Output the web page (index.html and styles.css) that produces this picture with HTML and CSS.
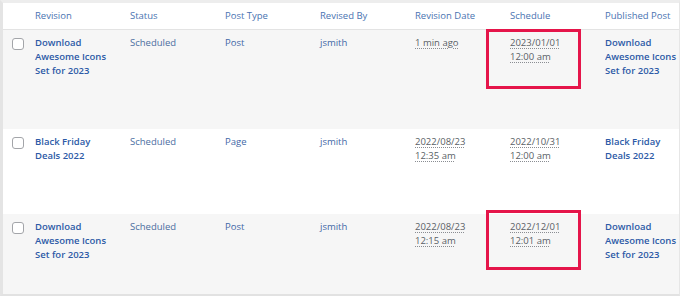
FILE: index.html
```html
<!DOCTYPE html>
<html lang="en">
<head>
<meta charset="utf-8">
<title>Revisions</title>
<link rel="stylesheet" href="styles.css">
</head>
<body>
<div class="frame">
  <table class="revisions">
    <colgroup>
      <col class="c-check">
      <col class="c-col"><col class="c-col"><col class="c-col"><col class="c-col"><col class="c-col"><col class="c-col"><col class="c-last">
    </colgroup>
    <thead>
      <tr>
        <th></th>
        <th>Revision</th>
        <th>Status</th>
        <th>Post Type</th>
        <th>Revised By</th>
        <th>Revision Date</th>
        <th>Schedule</th>
        <th>Published Post</th>
      </tr>
    </thead>
    <tbody>
      <tr class="alt">
        <td><span class="check"></span></td>
        <td><a class="title">Download Awesome Icons Set for 2023</a></td>
        <td class="status">Scheduled</td>
        <td class="meta">Post</td>
        <td class="meta">jsmith</td>
        <td><abbr class="date">1 min ago</abbr></td>
        <td class="sched"><abbr class="date">2023/01/01<br>12:00 am</abbr><span class="mark"></span></td>
        <td><a class="title">Download Awesome Icons Set for 2023</a></td>
      </tr>
      <tr>
        <td><span class="check"></span></td>
        <td><a class="title">Black Friday Deals 2022</a></td>
        <td class="status">Scheduled</td>
        <td class="meta">Page</td>
        <td class="meta">jsmith</td>
        <td><abbr class="date">2022/08/23<br>12:35 am</abbr></td>
        <td class="sched"><abbr class="date">2022/10/31<br>12:00 am</abbr></td>
        <td><a class="title">Black Friday Deals 2022</a></td>
      </tr>
      <tr class="alt last">
        <td><span class="check"></span></td>
        <td><a class="title">Download Awesome Icons Set for 2023</a></td>
        <td class="status">Scheduled</td>
        <td class="meta">Post</td>
        <td class="meta">jsmith</td>
        <td><abbr class="date">2022/08/23<br>12:15 am</abbr></td>
        <td class="sched"><abbr class="date">2022/12/01<br>12:01 am</abbr><span class="mark mark-low"></span></td>
        <td><a class="title">Download Awesome Icons Set for 2023</a></td>
      </tr>
    </tbody>
  </table>
</div>
</body>
</html>
```
FILE: styles.css
```css
html, body {
  margin: 0;
  padding: 0;
  background: #ffffff;
}
body {
  width: 680px;
  height: 296px;
  overflow: hidden;
  font-family: "Open Sans", "Noto Sans", sans-serif;
  font-size: 9.5px;
}
.frame {
  width: 676px;
  height: 291px;
  border-left: 3px solid #e4e4e4;
  border-top: 3px solid #ededed;
  border-bottom: 2px solid #e2e2e2;
  border-right: 1px solid #e6e6e6;
  overflow: hidden;
  background: #fff;
}
.revisions {
  border-collapse: collapse;
  table-layout: fixed;
  width: 677px;
}
.c-check { width: 32px; }
.c-col { width: 95px; }
.c-last { width: 75px; }
th {
  height: 26px;
  padding: 0;
  text-align: left;
  font-weight: 400;
  font-size: 9.5px;
  color: #4a73b1;
  border-bottom: 1px solid #e3e3e3;
  vertical-align: middle;
  white-space: nowrap;
  line-height: 14px;
}
td {
  padding: 6px 12px 51px 0;
  vertical-align: top;
  line-height: 14px;
  color: #3e67a6;
}
td:first-child { padding: 8px 0 0 9px; }
td:last-child { padding-right: 0; }
tr.last td { padding-bottom: 33px; }
tr.last td:first-child { padding-bottom: 0; }
tr.alt td { background: #f6f6f6; }
.check {
  display: block;
  width: 10px;
  height: 10px;
  border: 1px solid #a3a5a9;
  border-radius: 3px;
  background: #fff;
}
.title {
  font-weight: 600;
  color: #2c5aa6;
  text-decoration: none;
}
.status { color: #4c6e9f; }
.meta { color: #3f67a6; }
.date {
  color: #5a5f66;
  text-decoration: underline dotted #8a8d92;
  text-underline-offset: 2px;
}
.sched { position: relative; }
.mark {
  position: absolute;
  left: -24px;
  top: -1px;
  width: 89px;
  height: 54px;
  border: 3px solid #e5154a;
}
.mark-low { top: -4px; }
```
